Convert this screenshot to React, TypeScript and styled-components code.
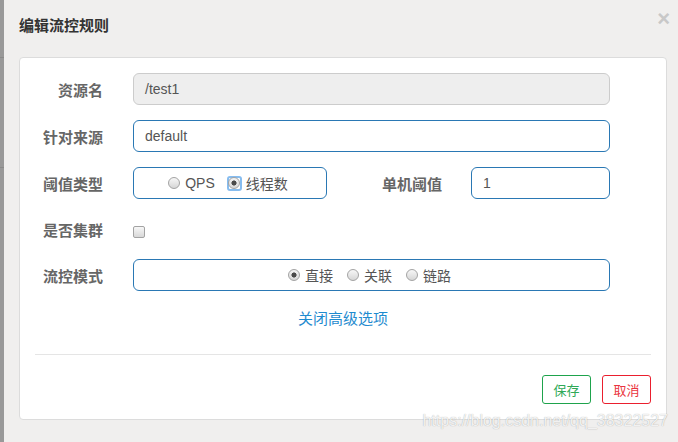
import React from 'react';
import styled, { createGlobalStyle } from 'styled-components';

const GlobalStyle = createGlobalStyle`
  html, body {
    margin: 0;
    padding: 0;
    background: #f0efee;
  }
  * {
    box-sizing: border-box;
  }
`;

const App = () => {
  return (
    <Root>
      <GlobalStyle />
      <Backdrop />
      <Modal>
        <Header>
          <Title>编辑流控规则</Title>
          <Close>×</Close>
        </Header>
        <Card>
          <Form>
            <Label>资源名</Label>
            <Input disabled>/test1</Input>

            <Label>针对来源</Label>
            <Input>default</Input>

            <Label>阈值类型</Label>
            <Split>
              <RadioBox width={194}>
                <Radio label="QPS" />
                <Radio label="线程数" checked focused />
              </RadioBox>
              <InlineLabel>单机阈值</InlineLabel>
              <Input>1</Input>
            </Split>

            <Label>是否集群</Label>
            <CheckRow>
              <CheckBox />
            </CheckRow>

            <Label>流控模式</Label>
            <RadioBox>
              <Radio label="直接" checked />
              <Radio label="关联" />
              <Radio label="链路" />
            </RadioBox>
          </Form>
          <ToggleLink>关闭高级选项</ToggleLink>
          <Divider />
          <Footer>
            <Button tone="#1ea34c" text="#2fa957">保存</Button>
            <Button tone="#ea1f2e" text="#ea3440">取消</Button>
          </Footer>
        </Card>
        <Watermark>https://blog.csdn.net/qq_38322527</Watermark>
      </Modal>
    </Root>
  );
};

export default App;

const Radio = ({ label, checked, focused }: RadioProps) => (
  <RadioItem>
    <RadioRing focused={focused}>
      <RadioDot checked={checked} />
    </RadioRing>
    <RadioText>{label}</RadioText>
  </RadioItem>
);

type RadioProps = {
  label: string;
  checked?: boolean;
  focused?: boolean;
};

const Root = styled.div`
  display: flex;
  width: 678px;
  height: 442px;
  overflow: hidden;
  font-family: 'Liberation Sans', 'Noto Sans CJK SC', sans-serif;
`;

const Backdrop = styled.div`
  width: 4px;
  flex: none;
  background:
    linear-gradient(#8a8a8a, #8a8a8a) 0 57px / 4px 1px no-repeat,
    linear-gradient(#8a8a8a, #8a8a8a) 0 167px / 4px 1px no-repeat,
    #999999;
`;

const Modal = styled.div`
  position: relative;
  flex: 1;
  background: #f0efee;
  padding: 0 11px 0 15px;
`;

const Header = styled.div`
  display: flex;
  justify-content: space-between;
  align-items: flex-start;
  height: 57px;
  padding-top: 16px;
`;

const Title = styled.div`
  font-size: 15px;
  line-height: 20px;
  font-weight: 700;
  color: #333;
`;

const Close = styled.div`
  margin-top: -12px;
  margin-right: -3px;
  font-size: 22px;
  font-weight: 700;
  color: #c8c8c8;
  line-height: 30px;
`;

const Card = styled.div`
  height: 363px;
  background: #fff;
  border: 1px solid #dcdcdc;
  border-radius: 4px;
  padding: 15px;
  display: flex;
  flex-direction: column;
`;

const Form = styled.div`
  display: grid;
  grid-template-columns: 68px 1fr;
  grid-template-rows: 32px 32px 32px 30px 32px;
  column-gap: 30px;
  row-gap: 15px;
  padding-right: 41px;
  align-items: center;
`;

const Label = styled.div`
  text-align: right;
  font-size: 15px;
  font-weight: 700;
  color: #666;
  font-family: 'Noto Sans CJK SC', sans-serif;
`;

const Input = styled.div<{ disabled?: boolean }>`
  height: 32px;
  flex: 1;
  display: flex;
  align-items: center;
  padding: 0 11px;
  font-size: 14px;
  color: #555;
  border-radius: 6px;
  border: 1px solid ${(p) => (p.disabled ? '#cccccc' : '#2a78b4')};
  background: ${(p) => (p.disabled ? '#eeeeee' : '#ffffff')};
`;

const Split = styled.div`
  display: flex;
  align-items: center;
`;

const InlineLabel = styled(Label)`
  width: 144px;
  flex: none;
  padding-right: 29px;
`;

const RadioBox = styled.div<{ width?: number }>`
  height: 32px;
  width: ${(p) => (p.width ? `${p.width}px` : 'auto')};
  flex: none;
  display: flex;
  align-items: center;
  justify-content: center;
  gap: 12px;
  border: 1px solid #2a78b4;
  border-radius: 6px;
  padding-right: 6px;
`;

const RadioItem = styled.div`
  display: flex;
  align-items: center;
  gap: 4px;
`;

const RadioRing = styled.span<{ focused?: boolean }>`
  display: flex;
  align-items: center;
  justify-content: center;
  width: 15px;
  height: 15px;
  border-radius: 3px;
  border: 2px solid ${(p) => (p.focused ? '#86bcef' : 'transparent')};
`;

const RadioDot = styled.span<{ checked?: boolean }>`
  width: 12px;
  height: 12px;
  flex: none;
  border-radius: 50%;
  border: 1px solid #a3a3a3;
  background: ${(p) =>
    p.checked
      ? 'radial-gradient(circle, #4a4a4a 0 2.3px, transparent 2.8px), linear-gradient(#f4f4f4, #d8d8d8)'
      : 'linear-gradient(#f7f7f7, #d6d6d6)'};
`;

const RadioText = styled.span`
  font-size: 14px;
  color: #555;
  font-family: 'Liberation Sans', 'Noto Sans CJK SC', sans-serif;
`;

const CheckRow = styled.div`
  height: 30px;
  display: flex;
  align-items: center;
  padding-top: 6px;
`;

const CheckBox = styled.span`
  width: 12px;
  height: 12px;
  border: 1px solid #a3a3a3;
  border-radius: 2px;
  background: linear-gradient(#f7f7f7, #d8d8d8);
`;

const ToggleLink = styled.div`
  margin-top: 17px;
  text-align: center;
  font-size: 15px;
  line-height: 20px;
  color: #1f8bcf;
  font-family: 'Noto Sans CJK SC', sans-serif;
`;

const Divider = styled.div`
  margin-top: 26px;
  height: 1px;
  background: #e5e5e5;
`;

const Footer = styled.div`
  display: flex;
  justify-content: flex-end;
  gap: 11px;
  margin-top: 20px;
`;

const Button = styled.div<{ tone: string; text: string }>`
  width: 49px;
  height: 29px;
  display: flex;
  align-items: center;
  justify-content: center;
  border: 1px solid ${(p) => p.tone};
  border-radius: 3px;
  color: ${(p) => p.text};
  font-size: 13px;
  font-family: 'Noto Sans CJK SC', sans-serif;
`;

const Watermark = styled.div`
  position: absolute;
  right: 10px;
  top: 412px;
  font-size: 16px;
  color: rgba(255, 255, 255, 0.85);
  text-shadow: 0 0 1px rgba(0, 0, 0, 0.35);
  font-family: 'Liberation Sans', sans-serif;
  pointer-events: none;
`;
